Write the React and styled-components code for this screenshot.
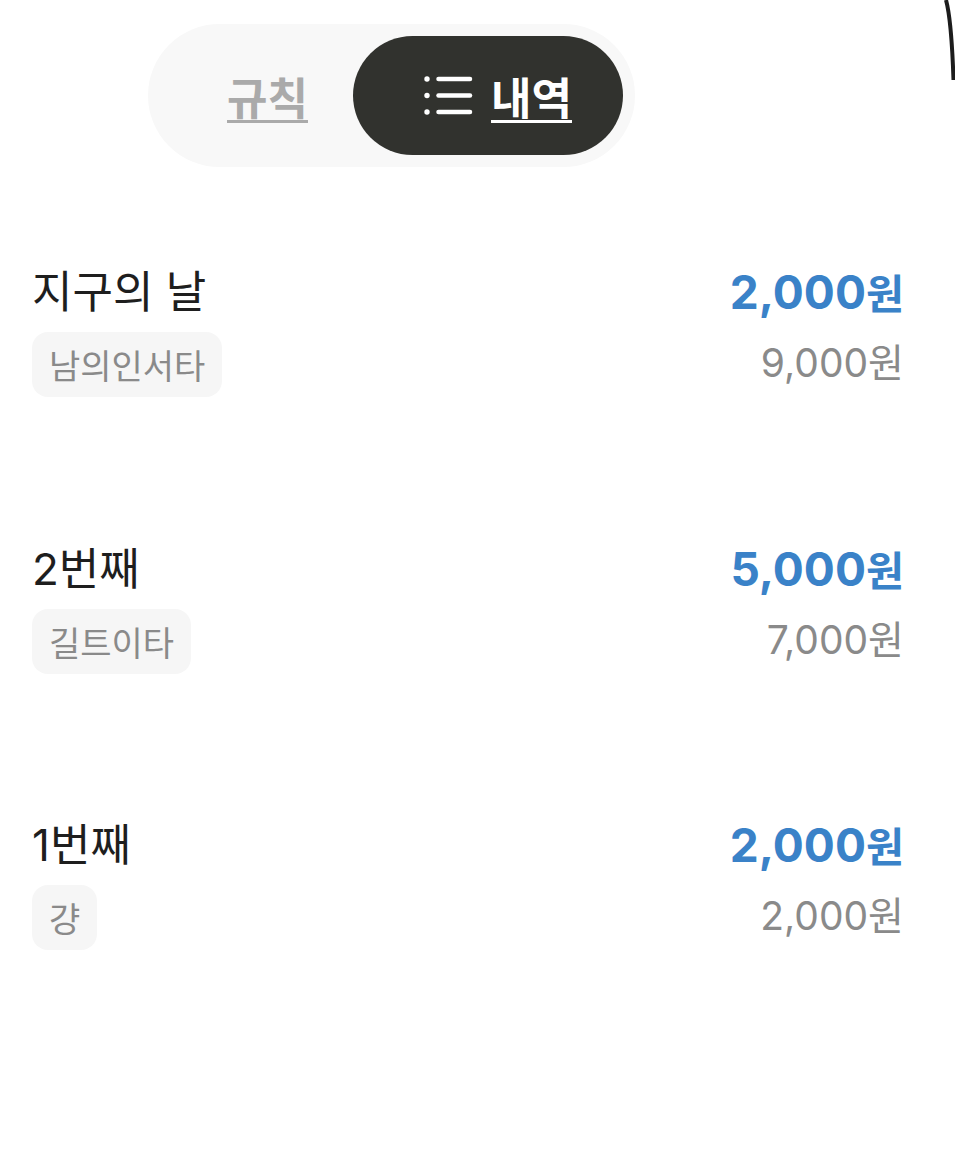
import React from "react";
import styled, { createGlobalStyle } from "styled-components";

const GlobalStyle = createGlobalStyle`
  html, body {
    margin: 0;
    padding: 0;
    background: #ffffff;
  }
  body {
    font-family: Inter, "Noto Sans CJK KR", sans-serif;
    -webkit-font-smoothing: antialiased;
  }
`;

const Page = styled.div`
  position: relative;
  width: 955px;
  min-height: 1151px;
  background: #ffffff;
  overflow: hidden;
`;

const Corner = styled.svg`
  position: absolute;
  top: 0;
  right: 0;
`;

const Header = styled.div`
  display: flex;
  padding: 24px 0 0 148px;
`;

const Segmented = styled.div`
  display: flex;
  align-items: stretch;
  width: 487px;
  height: 143px;
  box-sizing: border-box;
  padding: 12px;
  border-radius: 72px;
  background: #f8f8f8;
`;

const Tab = styled.button`
  display: flex;
  align-items: center;
  justify-content: center;
  gap: 17px;
  border: none;
  margin: 0;
  cursor: pointer;
  font-family: inherit;
  font-size: 44px;
  font-weight: 700;
  text-decoration: underline;
  text-decoration-thickness: 3px;
  text-underline-offset: 5px;
  border-radius: 60px;
  background: ${(p) => (p.$active ? "#31322e" : "transparent")};
  color: ${(p) => (p.$active ? "#ffffff" : "#aaaaaa")};
  flex: ${(p) => (p.$active ? "0 0 270px" : "1")};
  padding: ${(p) => (p.$active ? "0 0 0 20px" : "0 0 0 22px")};
`;

const List = styled.div`
  display: flex;
  flex-direction: column;
  padding: 98px 51px 0 32px;
`;

const Row = styled.div`
  display: flex;
  justify-content: space-between;
  align-items: flex-start;
  height: 276.5px;
`;

const Left = styled.div`
  display: flex;
  flex-direction: column;
  align-items: flex-start;
  gap: 13px;
`;

const Title = styled.div`
  font-size: 44px;
  line-height: 54px;
  color: #1e1e1e;
`;

const Tag = styled.span`
  display: inline-flex;
  align-items: center;
  height: 65px;
  padding: 0 17px;
  border-radius: 16px;
  background: #f6f6f6;
  color: #8a8a8a;
  font-size: 34px;
`;

const Right = styled.div`
  display: flex;
  flex-direction: column;
  align-items: flex-end;
  gap: 18px;
`;

const Amount = styled.div`
  font-size: 46px;
  line-height: 54px;
  font-weight: 700;
  color: #3a82c8;
`;

const Sub = styled.div`
  font-size: 39px;
  line-height: 48px;
  color: #8a8a8a;
`;

const Unit = styled.span`
  font-size: 0.9em;
`;

const ListIcon = () => (
  <svg width="50" height="42" viewBox="0 0 50 42" fill="none">
    <circle cx="3" cy="4" r="2.7" fill="#fff" />
    <circle cx="3" cy="20.5" r="2.7" fill="#fff" />
    <circle cx="3" cy="37" r="2.7" fill="#fff" />
    <g stroke="#fff" strokeWidth="4.5" strokeLinecap="round">
      <line x1="14.5" y1="4" x2="46" y2="4" />
      <line x1="14.5" y1="20.5" x2="46" y2="20.5" />
      <line x1="14.5" y1="37" x2="46" y2="37" />
    </g>
  </svg>
);

const won = (n) => (
  <>
    {n}
    <Unit>원</Unit>
  </>
);

const items = [
  { title: "지구의 날", tag: "남의인서타", amount: "2,000", total: "9,000" },
  { title: "2번째", tag: "길트이타", amount: "5,000", total: "7,000" },
  { title: "1번째", tag: "걍", amount: "2,000", total: "2,000" },
];

export default function App() {
  return (
    <Page>
      <GlobalStyle />
      <Corner width="14" height="90" viewBox="0 0 14 90">
        <path d="M5 0 Q 10.5 20 12.5 80" stroke="#1c1c1c" strokeWidth="4" fill="none" />
      </Corner>
      <Header>
        <Segmented>
          <Tab>규칙</Tab>
          <Tab $active>
            <ListIcon />
            내역
          </Tab>
        </Segmented>
      </Header>
      <List>
        {items.map((it) => (
          <Row key={it.title}>
            <Left>
              <Title>{it.title}</Title>
              <Tag>{it.tag}</Tag>
            </Left>
            <Right>
              <Amount>{won(it.amount)}</Amount>
              <Sub>{it.total}원</Sub>
            </Right>
          </Row>
        ))}
      </List>
    </Page>
  );
}
